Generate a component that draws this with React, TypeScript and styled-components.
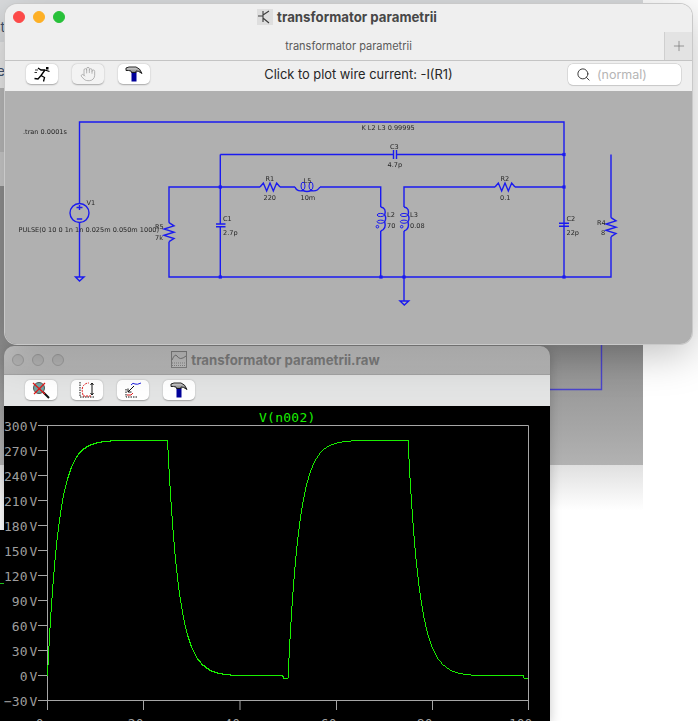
import React from "react";
import styled, { createGlobalStyle } from "styled-components";
import { Hand, Search, Plus } from "lucide-react";

const GlobalStyle = createGlobalStyle`
  html, body {
    margin: 0;
    padding: 0;
    background: #fff;
    width: 698px;
    height: 721px;
    overflow: hidden;
    font-family: "Inter", "Liberation Sans", sans-serif;
  }
`;

const Desktop = styled.div`
  position: relative;
  width: 698px;
  height: 721px;
  overflow: hidden;
  background: #fff;
`;

/* the big window that sits behind both of the others */
const BehindWindow = styled.div`
  position: absolute;
  left: 0;
  top: 0;
  width: 643px;
  display: flex;
  flex-direction: column;
`;

const Band = styled.div<{ $h: number; $bg: string }>`
  height: ${(p) => p.$h}px;
  background: ${(p) => p.$bg};
  overflow: hidden;
  position: relative;
  font-size: 14px;
  line-height: ${(p) => p.$h}px;
  color: #40536f;
`;

const BehindText = styled.span`
  position: absolute;
  right: 638px;
  top: 6px;
  white-space: nowrap;
`;

const BehindWire = styled.svg`
  position: absolute;
  left: 550px;
  top: 0;
`;

const BlackSliver = styled.div`
  position: absolute;
  left: 0;
  top: 530px;
  width: 4px;
  height: 191px;
  background: #000;
  display: flex;
  flex-direction: column;
  padding-top: 53px;
  box-sizing: border-box;
`;

const GreenTick = styled.div`
  height: 1px;
  background: #1fd01f;
`;

const Window = styled.div<{ $front?: boolean }>`
  position: absolute;
  left: ${(p) => (p.$front ? 5 : 4)}px;
  top: ${(p) => (p.$front ? 4 : 346)}px;
  width: ${(p) => (p.$front ? 687 : 546)}px;
  height: ${(p) => (p.$front ? 340 : 375)}px;
  border-radius: ${(p) => (p.$front ? "12px" : "10px 10px 0 0")};
  overflow: hidden;
  display: flex;
  flex-direction: column;
  box-shadow: ${(p) =>
    p.$front
      ? "0 0 0 1px #c9c9c9, 0 10px 40px rgba(0,0,0,.25)"
      : "0 3px 12px rgba(0,0,0,.22)"};
`;

const TitleBar = styled.div<{ $front?: boolean }>`
  display: grid;
  grid-template-columns: 1fr auto 1fr;
  align-items: center;
  height: ${(p) => (p.$front ? 28 : 29)}px;
  flex: none;
  box-sizing: border-box;
  padding: 0 11px ${(p) => (p.$front ? 2 : 0)}px 8px;
  background: ${(p) =>
    p.$front ? "#efefef" : "linear-gradient(#c8c8c8, #b2b2b2)"};
  border-bottom: ${(p) => (p.$front ? "none" : "1px solid #a3a3a3")};
`;

const Lights = styled.div`
  display: flex;
  gap: 8px;
`;

const Light = styled.span<{ $color: string; $ring?: string }>`
  width: 12px;
  height: 12px;
  border-radius: 50%;
  box-sizing: border-box;
  background: ${(p) => p.$color};
  border: 1px solid ${(p) => p.$ring ?? p.$color};
`;

const WindowTitle = styled.div<{ $dim?: boolean }>`
  display: flex;
  align-items: center;
  gap: 4px;
  font-size: 13.25px;
  font-weight: 700;
  color: ${(p) => (p.$dim ? "#7c7c7c" : "#474747")};
`;

const TabBar = styled.div`
  display: flex;
  align-items: center;
  height: 29px;
  flex: none;
  box-sizing: border-box;
  background: #efefef;
  border-bottom: 1px solid #c4c4c4;
`;

const TabLabel = styled.div`
  flex: 1;
  text-align: center;
  padding-left: 28px;
  font-size: 11px;
  color: #5a5a5a;
`;

const NewTab = styled.div`
  width: 28px;
  height: 100%;
  display: flex;
  align-items: center;
  justify-content: center;
  background: #e3e3e3;
  border-left: 1px solid #cfcfcf;
  box-sizing: border-box;
  color: #6d6d6d;
`;

const Toolbar = styled.div<{ $plot?: boolean }>`
  height: ${(p) => (p.$plot ? 31 : 30)}px;
  flex: none;
  box-sizing: border-box;
  padding: ${(p) => (p.$plot ? "5px 0 0 21px" : "3px 11px 0 21px")};
  background: ${(p) => (p.$plot ? "#e3e4e4" : "#efefef")};
  display: grid;
  grid-template-columns: 1fr auto 1fr;
  align-items: start;
`;

const ToolGroup = styled.div`
  display: flex;
  gap: 14px;
`;

const ToolButton = styled.div<{ $disabled?: boolean }>`
  width: 32px;
  height: 20px;
  border-radius: 5px;
  display: flex;
  align-items: center;
  justify-content: center;
  background: ${(p) => (p.$disabled ? "#f3f3f3" : "#fff")};
  box-shadow: 0 0.5px 1.5px rgba(0, 0, 0, 0.3);
  color: #a3a3a3;
`;

const Hint = styled.div`
  margin-left: 10px;
  font-size: 12.87px;
  line-height: 22px;
  color: #262626;
  white-space: nowrap;
`;

const SearchBox = styled.div`
  justify-self: end;
  width: 113px;
  height: 21px;
  box-sizing: border-box;
  border-radius: 5px;
  background: #fff;
  box-shadow: 0 0 0 0.5px #c6c6c6, 0 0.5px 1px rgba(0, 0, 0, 0.15);
  display: flex;
  align-items: center;
  gap: 6px;
  padding-left: 8px;
  font-size: 12.5px;
  color: #b5b5b5;
`;

const SchematicCanvas = styled.div`
  flex: 1;
  background: #b0b0b0;
`;

const SchematicSvg = styled.svg`
  display: block;
  filter: blur(0.25px);
`;

const Wire = styled.path`
  fill: none;
  stroke: #1a1af0;
  stroke-width: 1.4;
`;

const Dot = styled.rect`
  fill: #1a1af0;
`;

const Label = styled.text`
  font-family: "DejaVu Sans", sans-serif;
  font-size: 6.55px;
  fill: #262626;
`;

const PlotArea = styled.div`
  flex: 1;
  background: #000;
`;

const PlotSvg = styled.svg`
  display: block;
`;

const PlotText = styled.text<{ $green?: boolean }>`
  font-family: "DejaVu Sans Mono", monospace;
  font-size: 13px;
  fill: ${(p) => (p.$green ? "#19f000" : "#9e9e9e")};
`;

const zigV = (x: number, y0: number, y1: number) => {
  const s = (y1 - y0) / 6;
  return `M${x} ${y0} L${x + 5} ${y0 + s} L${x - 5} ${y0 + 2 * s} L${x + 5} ${y0 + 3 * s} L${x - 5} ${y0 + 4 * s} L${x + 5} ${y0 + 5 * s} L${x} ${y1}`;
};

const zigH = (y: number, x0: number, x1: number) => {
  const s = (x1 - x0) / 6;
  return `M${x0} ${y} L${x0 + s} ${y - 4} L${x0 + 2 * s} ${y + 4} L${x0 + 3 * s} ${y - 4} L${x0 + 4 * s} ${y + 4} L${x0 + 5 * s} ${y - 4} L${x1} ${y}`;
};

const coilV = (x: number) =>
  `M${x} 207 Q${x + 6} 208 ${x + 4} 215 Q${x + 6} 218 ${x + 4} 221.7 Q${x + 6} 229 ${x} 231`;

const WIRES = [
  "M79.5 203 V122 H564 V277",
  "M79.5 223 V277 M75.5 277 H84 L79.5 281 Z",
  "M169 222.7 V187 H260 M169 241.7 V277 H611 V236.7",
  "M220.3 154.5 H393.5 M396.5 154.5 H564 M393.5 150 V159 M396.5 150 V159",
  "M220.3 154.5 V224 M220.3 226.7 V277 M216 224 H225.5 M216 226.7 H225.5",
  "M280 187 H295 M320 187 H380.7 V207 M380.7 231 V277",
  "M404 207 V187 H495 M515 187 H564 M404 231 V301 M400 301 H408.7 L404.3 305 Z",
  "M559 223.3 H569 M559 226.3 H569",
  "M611 154.5 V217.7",
  zigV(169, 222.7, 241.7),
  zigV(611, 217.7, 236.7),
  zigH(187, 260, 280),
  zigH(187, 495, 515),
  coilV(380.7),
  coilV(404),
  "M295 187 Q297 192 303 190.5 Q307 192.5 311 190.5 Q317 192 320 187",
];

const JUNCTIONS: [number, number][] = [
  [220.3, 187],
  [220.3, 277],
  [381, 277],
  [404, 277],
  [564, 154.5],
  [564, 187],
  [564, 277],
];

const LABELS: [number, number, string][] = [
  [23, 134, ".tran 0.0001s"],
  [86.5, 204.5, "V1"],
  [18.5, 232, "PULSE(0 10 0 1n 1n 0.025m 0.050m 1000)"],
  [155, 229, "R5"],
  [155, 240, "7k"],
  [223, 221, "C1"],
  [223, 235, "2.7p"],
  [361.5, 129.5, "K L2 L3 0.99995"],
  [390, 148.5, "C3"],
  [387.5, 166.5, "4.7p"],
  [265.5, 180.5, "R1"],
  [263.5, 199.5, "220"],
  [303.5, 182.5, "L5"],
  [300.5, 199.5, "10m"],
  [387, 216.5, "L2"],
  [387, 228, "70"],
  [410, 216.5, "L3"],
  [410, 228, "0.08"],
  [500.5, 180.5, "R2"],
  [500, 199.5, "0.1"],
  [566.5, 221, "C2"],
  [566.5, 235, "22p"],
  [597, 224.5, "R4"],
  [601, 235, "8"],
];

const Y_TICKS = [300, 270, 240, 210, 180, 150, 120, 90, 60, 30, 0, -30];
const X_TICKS = [
  [47.5, "0µs"],
  [143.5, "20µs"],
  [240, "40µs"],
  [336.5, "60µs"],
  [432.5, "80µs"],
  [528.5, "100µs"],
] as const;

const waveform = () => {
  const toY = (v: number) => 675.5 - (v * 25) / 30;
  const pts: string[] = [];
  const cycle = (x0: number, start: number) => {
    for (let x = 0; x <= 120; x++) {
      const v = 283 - (283 - start) * Math.exp(-x / 11.2);
      pts.push(`${x0 + x},${toY(v).toFixed(0)}`);
    }
    for (let x = 0; x <= 120; x++) {
      const v = 283 * Math.exp(-x / 11.4) - (x > 115 ? 3 : 0);
      pts.push(`${x0 + 120 + x},${toY(v).toFixed(0)}`);
    }
  };
  cycle(47.5, 0);
  cycle(288, -3);
  return pts.join(" ");
};

const RunnerIcon = () => (
  <svg width="17" height="15" viewBox="0 0 17 15" fill="none" stroke="#000" strokeWidth="1.3">
    <rect x="12" y="0" width="2.5" height="2.5" fill="#000" stroke="none" />
    <path d="M11 3 L7 8.5 M11 3 L15.5 4.5 M11 3 L7 3 L4 1 M7 8.5 L10.5 10.5 L9.5 14.5 M7 8.5 L4 12 L0.5 11.5" />
    <path d="M1 3 H4 M0.5 5.5 H3" strokeWidth="0.8" />
  </svg>
);

const HammerIcon = () => (
  <svg width="18" height="16" viewBox="0 0 18 16">
    <defs>
      <linearGradient id="hammerHead" x1="0" y1="0" x2="0" y2="1">
        <stop offset="0" stopColor="#d8d8d8" />
        <stop offset="1" stopColor="#6f6f6f" />
      </linearGradient>
    </defs>
    <rect x="6.5" y="6" width="5" height="9.5" fill="#00009a" />
    <path
      d="M1 2 L4 1 H11 Q15 2 17 7.5 Q13 4.5 11 5 L11 6.5 H6.5 L6 5 L3.5 4.5 L1 4.5 Z"
      fill="url(#hammerHead)"
      stroke="#111"
      strokeWidth="0.9"
    />
  </svg>
);

const ZoomOffIcon = () => (
  <svg width="18" height="18" viewBox="0 0 18 18" fill="none">
    <circle cx="7" cy="7" r="5.5" fill="#6fa3a3" stroke="#555" strokeWidth="1" />
    <path d="M11 11 L17 17" stroke="#111" strokeWidth="2" />
    <path d="M1 2 L13 13 M13 2 L2 13" stroke="#e01818" strokeWidth="1.3" />
  </svg>
);

const AutoRangeIcon = () => (
  <svg width="18" height="17" viewBox="0 0 18 17" fill="none">
    <path d="M2 0 V15 H17" stroke="#111" strokeWidth="1" strokeDasharray="1.5 1" />
    <path d="M5 13 Q3 6 6 3 Q8 1 11 1" stroke="#e01818" strokeWidth="1" strokeDasharray="2 1" />
    <path d="M5 14 H13" stroke="#e01818" strokeWidth="1" strokeDasharray="2 1" />
    <path d="M14 1 V13 M12.5 3 L14 1 L15.5 3 M12.5 11 L14 13 L15.5 11" stroke="#111" strokeWidth="1" />
  </svg>
);

const ZoomBackIcon = () => (
  <svg width="18" height="16" viewBox="0 0 18 16" fill="none">
    <path d="M2 7 V15 H13" stroke="#111" strokeWidth="1" strokeDasharray="1.5 1" />
    <path d="M7 3 Q9 0 11 2 Q13 3 17 1" stroke="#2020e0" strokeWidth="1" />
    <path d="M3 13 Q8 14 9 11" stroke="#e01818" strokeWidth="1" />
    <path d="M10 4 L4 10 M4 6.5 V10 H7.5" stroke="#111" strokeWidth="1" />
  </svg>
);

const SchematicIcon = () => (
  <svg width="16" height="16" viewBox="0 0 16 16" fill="none">
    <rect width="16" height="16" fill="#dedede" />
    <path d="M1 7 H6 M6 2 V13 M6 6 L12 2 M6 9 L12 14" stroke="#3c3c3c" strokeWidth="1.1" />
  </svg>
);

const PlotFileIcon = () => (
  <svg width="16" height="18" viewBox="0 0 16 18" fill="none">
    <rect x="0.5" y="0.5" width="15" height="16" fill="#bdbdbd" stroke="#7f7f7f" />
    <path d="M1 9 Q4 2 6 5 Q9 10 15 5" stroke="#757575" />
    <path d="M1 12 H15 M1 14.5 H15" stroke="#858585" strokeDasharray="1 1" />
  </svg>
);

export default function App() {
  return (
    <Desktop>
      <GlobalStyle />
      <BehindWindow>
        <Band $h={42} $bg="#dadcde">
          <BehindText>st</BehindText>
        </Band>
        <Band $h={46} $bg="#e9e9e9">
          <BehindText>e</BehindText>
        </Band>
        <Band $h={64} $bg="#b8b8b8" />
        <Band $h={34} $bg="#c9c9c9" />
        <Band $h={159} $bg="#8f8f8f" />
        <Band $h={120} $bg="linear-gradient(#8e8e8e, #a6a6a6 70%, #b2b2b2)">
          <BehindWire width="60" height="50" viewBox="0 0 60 50" fill="none">
            <path d="M0 44.5 H51.5 V0" stroke="#4a44cc" strokeWidth="1.4" />
          </BehindWire>
        </Band>
        <Band $h={65} $bg="linear-gradient(#e0e0e0, #fff 70%)" />
      </BehindWindow>
      <BlackSliver>
        <GreenTick />
      </BlackSliver>

      <Window>
        <TitleBar>
          <Lights>
            <Light $color="#b3b3b3" $ring="#9c9c9c" />
            <Light $color="#b3b3b3" $ring="#9c9c9c" />
            <Light $color="#b3b3b3" $ring="#9c9c9c" />
          </Lights>
          <WindowTitle $dim>
            <PlotFileIcon />
            transformator parametrii.raw
          </WindowTitle>
        </TitleBar>
        <Toolbar $plot>
          <ToolGroup>
            <ToolButton>
              <ZoomOffIcon />
            </ToolButton>
            <ToolButton>
              <AutoRangeIcon />
            </ToolButton>
            <ToolButton>
              <ZoomBackIcon />
            </ToolButton>
            <ToolButton>
              <HammerIcon />
            </ToolButton>
          </ToolGroup>
        </Toolbar>
        <PlotArea>
          <PlotSvg width="546" height="315" viewBox="4 406 546 315">
            <path
              d="M47.5 425.5 H528.5 V710 M47.5 425.5 V710 M47.5 700.5 H528.5"
              fill="none"
              stroke="#a6a6a6"
            />
            {Y_TICKS.map((v) => {
              const y = 675.5 - (v * 25) / 30;
              return (
                <g key={v}>
                  <path d={`M38 ${y} H47.5`} stroke="#a6a6a6" />
                  <PlotText x="27.5" y={y + 5} textAnchor="end">
                    {v < 0 ? `\u2212${-v}` : v}
                  </PlotText>
                  <PlotText x="29.5" y={y + 5}>
                    V
                  </PlotText>
                </g>
              );
            })}
            {X_TICKS.map(([x, text]) => (
              <g key={text}>
                <path d={`M${x} 700.5 V710`} stroke="#a6a6a6" />
                <PlotText x={x} y="728" textAnchor="middle">
                  {text}
                </PlotText>
              </g>
            ))}
            <PlotText $green x="259" y="421.5" letterSpacing="0.25">
              V(n002)
            </PlotText>
            <polyline
              points={waveform()}
              fill="none"
              stroke="#19f000"
              strokeWidth="1"
              shapeRendering="crispEdges"
            />
          </PlotSvg>
        </PlotArea>
      </Window>

      <Window $front>
        <TitleBar $front>
          <Lights>
            <Light $color="#fc4a49" />
            <Light $color="#fdb026" />
            <Light $color="#28c13a" />
          </Lights>
          <WindowTitle>
            <SchematicIcon />
            transformator parametrii
          </WindowTitle>
        </TitleBar>
        <TabBar>
          <TabLabel>transformator parametrii</TabLabel>
          <NewTab>
            <Plus size={16} strokeWidth={1} />
          </NewTab>
        </TabBar>
        <Toolbar>
          <ToolGroup>
            <ToolButton>
              <RunnerIcon />
            </ToolButton>
            <ToolButton $disabled>
              <Hand size={16} strokeWidth={1.2} />
            </ToolButton>
            <ToolButton>
              <HammerIcon />
            </ToolButton>
          </ToolGroup>
          <Hint>Click to plot wire current: -I(R1)</Hint>
          <SearchBox>
            <Search size={15} color="#3d3d3d" strokeWidth={1.6} />
            (normal)
          </SearchBox>
        </Toolbar>
        <SchematicCanvas>
          <SchematicSvg width="687" height="253" viewBox="5 91 687 253">
            {WIRES.map((d) => (
              <Wire key={d} d={d} />
            ))}
            <circle cx="79.5" cy="213" r="9.5" fill="none" stroke="#1a1af0" strokeWidth="1.4" />
            <Wire d="M76.5 207.5 H82.5 M79.5 205 V210 M76.8 219 H82.2" />
            {[
              [380.7, 215],
              [380.7, 221.7],
              [404, 215],
              [404, 221.7],
            ].map(([cx, cy]) => (
              <ellipse key={`${cx}-${cy}`} cx={cx} cy={cy} rx="3.6" ry="1.6" fill="none" stroke="#1a1af0" />
            ))}
            {[303, 311].map((cx) => (
              <ellipse key={cx} cx={cx} cy="186" rx="2" ry="3.8" fill="none" stroke="#1a1af0" />
            ))}
            <circle cx="377.4" cy="226.7" r="1.3" fill="none" stroke="#1a1af0" />
            <circle cx="401.7" cy="226.7" r="1.3" fill="none" stroke="#1a1af0" />
            {JUNCTIONS.map(([x, y]) => (
              <Dot key={`${x}-${y}`} x={x - 1.6} y={y - 1.6} width="3.2" height="3.2" />
            ))}
            {LABELS.map(([x, y, text]) => (
              <Label key={text} x={x} y={y}>
                {text}
              </Label>
            ))}
          </SchematicSvg>
        </SchematicCanvas>
      </Window>
    </Desktop>
  );
}
